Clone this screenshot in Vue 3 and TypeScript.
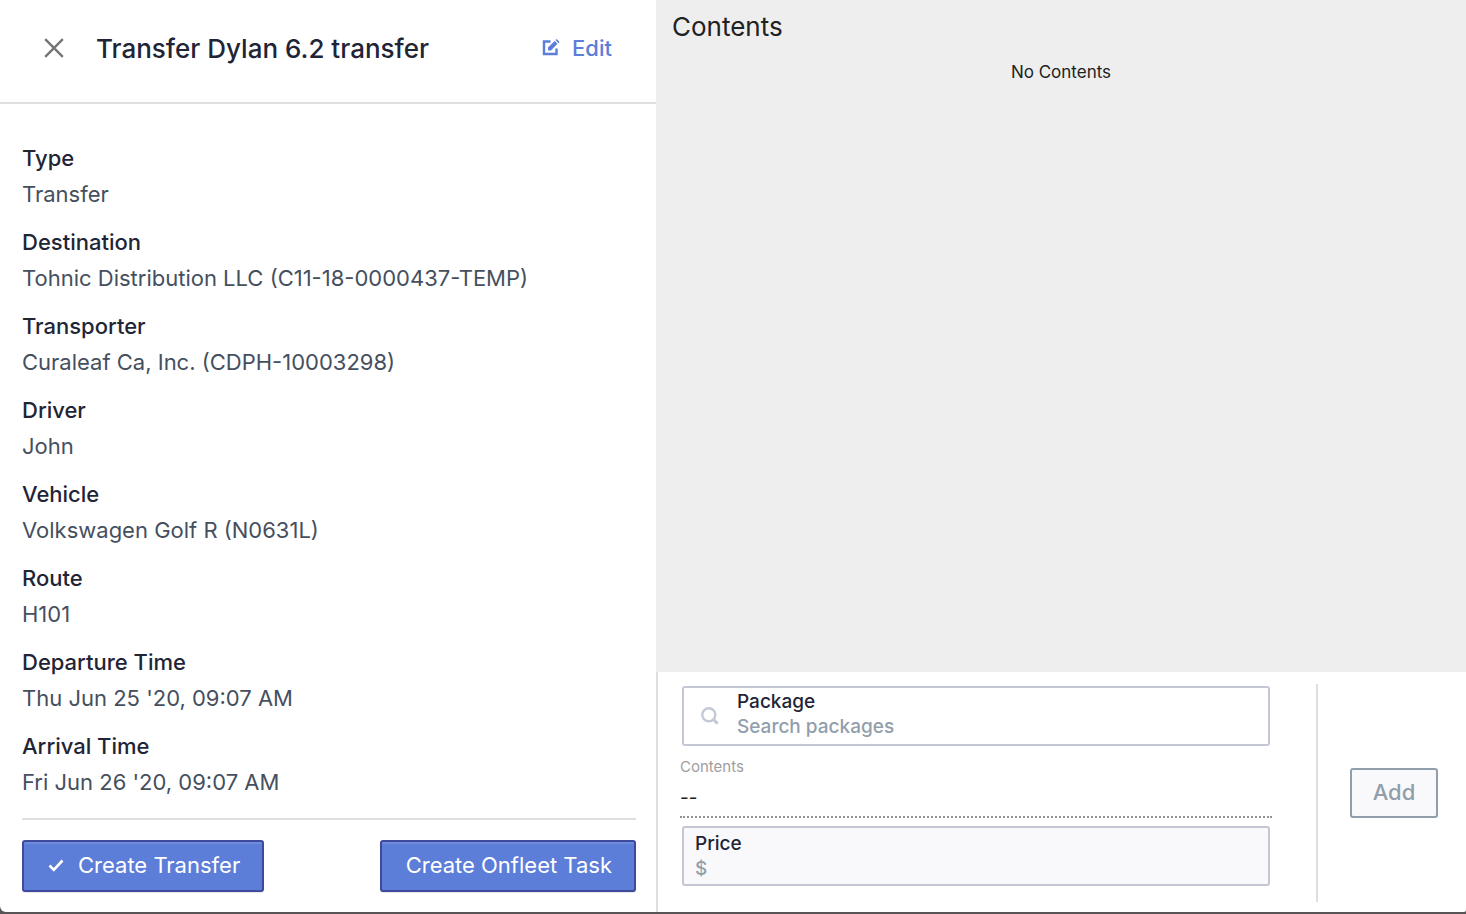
<script setup lang="ts">
import { ref } from 'vue'

interface Detail {
  label: string
  value: string
}

const details: Detail[] = [
  { label: 'Type', value: 'Transfer' },
  { label: 'Destination', value: 'Tohnic Distribution LLC (C11-18-0000437-TEMP)' },
  { label: 'Transporter', value: 'Curaleaf Ca, Inc. (CDPH-10003298)' },
  { label: 'Driver', value: 'John' },
  { label: 'Vehicle', value: 'Volkswagen Golf R (N0631L)' },
  { label: 'Route', value: 'H101' },
  { label: 'Departure Time', value: "Thu Jun 25 '20, 09:07 AM" },
  { label: 'Arrival Time', value: "Fri Jun 26 '20, 09:07 AM" },
]

const search = ref('')
const price = ref('')
const packageContents = ref('--')
</script>

<template>
  <main class="dialog">
    <section class="summary">
      <header class="summary-header">
        <button class="icon-button" type="button" aria-label="Close">
          <svg width="20" height="20" viewBox="0 0 20 20" fill="none" stroke="#757575" stroke-width="2.4">
            <path d="M1.2 1.2 18.8 18.8M18.8 1.2 1.2 18.8" />
          </svg>
        </button>
        <h1>Transfer Dylan 6.2 transfer</h1>
        <button class="edit" type="button">
          <svg width="18" height="18" viewBox="0 0 18 18">
            <path d="M8.500 2.500H2v12.500h12.500V9.500" fill="none" stroke="#5c7dd8" stroke-width="2.4" />
            <path d="M6 11.500V8.500L12.600 1.900l2.900 2.900L9 11.500zM13.400 1.100l.6-.6q.6-.6 1.200 0l1.900 1.900q.6.6 0 1.200l-.6.6z" fill="#5c7dd8" />
          </svg>
          <span>Edit</span>
        </button>
      </header>

      <div class="summary-body">
        <dl class="details">
          <div v-for="item in details" :key="item.label">
            <dt>{{ item.label }}</dt>
            <dd>{{ item.value }}</dd>
          </div>
        </dl>
        <footer class="actions">
          <button class="primary" type="button">
            <svg width="16" height="16" viewBox="0 0 16 16" fill="none" stroke="#fff" stroke-width="2.6">
              <path d="M1.500 8.500 5.800 12.800 14.500 3.500" />
            </svg>
            <span>Create Transfer</span>
          </button>
          <button class="primary" type="button">Create Onfleet Task</button>
        </footer>
      </div>
    </section>

    <section class="contents">
      <div class="contents-list">
        <h2>Contents</h2>
        <p>No Contents</p>
      </div>
      <form class="add-form" @submit.prevent>
        <div class="fields">
          <div class="field search-field">
            <svg width="18" height="18" viewBox="0 0 18 18" fill="none" stroke="#c4cad5">
              <circle cx="7.800" cy="7.800" r="6.500" stroke-width="2.400" />
              <path d="m12.400 12.400 4.300 4.300" stroke-width="3" />
            </svg>
            <div class="field-text">
              <label for="package">Package</label>
              <input id="package" v-model="search" type="text" placeholder="Search packages" />
            </div>
          </div>
          <div class="readonly-field">
            <label for="package-contents">Contents</label>
            <input id="package-contents" v-model="packageContents" type="text" disabled />
          </div>
          <div class="field price-field">
            <div class="field-text">
              <label for="price">Price</label>
              <input id="price" v-model="price" type="text" placeholder="$" disabled />
            </div>
          </div>
        </div>
        <div class="submit">
          <button class="add" type="submit" disabled>Add</button>
        </div>
      </form>
    </section>
  </main>
</template>

<style>
body {
  margin: 0;
  background: #585456;
}
</style>

<style scoped>
* {
  box-sizing: border-box;
}

.dialog {
  display: grid;
  grid-template-columns: minmax(0, 656fr) minmax(0, 810fr);
  min-height: calc(100vh - 2px);
  margin-bottom: 2px;
  overflow: hidden;
  background: #fff;
  border-radius: 0 0 2px 6px;
  color: #212b36;
  font-family: Inter, "Liberation Sans", sans-serif;
}

button,
input {
  font-family: inherit;
}

svg {
  display: block;
  flex: none;
}

.summary,
.contents,
.summary-body {
  display: flex;
  flex-direction: column;
}

.summary-body,
.contents-list {
  flex: 1;
}

.summary-header {
  display: flex;
  align-items: center;
  height: 104px;
  padding: 0 44px 6px;
  border-bottom: 2px solid #dfdfdf;
}

.icon-button,
.edit {
  padding: 0;
  border: 0;
  background: none;
  cursor: pointer;
}

h1 {
  flex: 1;
  margin: 0 0 0 32px;
  padding-top: 2px;
  color: #1f2536;
  font-size: 26px;
  font-weight: 500;
  line-height: 32px;
}

.edit {
  display: flex;
  align-items: center;
  gap: 12px;
  color: #5c7dd8;
  font-size: 22px;
  font-weight: 500;
  line-height: 28px;
}

.summary-body {
  padding: 36px 20px 20px 22px;
}

.details {
  display: flex;
  flex: 1;
  flex-direction: column;
  gap: 12px;
  margin: 0;
  padding-bottom: 18px;
  font-size: 22px;
  line-height: 36px;
}

dt {
  color: #1f2536;
  font-weight: 500;
}

dd {
  margin: 0;
  color: #454f5e;
}

.actions {
  display: flex;
  justify-content: space-between;
  padding-top: 20px;
  border-top: 2px solid #dfdfdf;
}

.primary {
  display: flex;
  align-items: center;
  gap: 14px;
  height: 52px;
  padding: 0 22px 2px 24px;
  border: 2px solid #3f4a9c;
  border-radius: 3px;
  background: #5c7dd8;
  box-shadow: inset 0 2px #6e8bdc, 0 1px 1px #e4e6ea;
  color: #fff;
  font-size: 22px;
  font-weight: 400;
  cursor: pointer;
}

.contents-list {
  padding: 10px 16px;
  background: #eee;
  color: #212121;
}

h2 {
  margin: 0;
  font-size: 26px;
  font-weight: 400;
  line-height: 34px;
}

.contents-list p {
  margin: 16px 0 0;
  font-size: 17px;
  line-height: 24px;
  text-align: center;
}

.add-form {
  display: flex;
  gap: 44px;
  height: 240px;
  padding: 12px 28px 10px 22px;
  border-left: 2px solid #dfdfdf;
}

.fields {
  display: flex;
  flex: 1;
  flex-direction: column;
  min-width: 0;
  padding-top: 2px;
}

.field {
  display: flex;
  align-items: center;
  height: 60px;
  margin: 0 2px;
  border: 2px solid #c4c8d5;
  border-radius: 3px;
}

.search-field {
  gap: 18px;
  padding: 0 17px 4px;
}

.search-field svg {
  margin-top: 4px;
}

.price-field {
  padding: 0 11px;
  background: #f9f9fb;
}

.field-text {
  flex: 1;
  min-width: 0;
}

.field label {
  display: block;
  color: #1f2536;
  font-size: 19px;
  font-weight: 500;
  line-height: 24px;
}

input {
  display: block;
  width: 100%;
  height: 24px;
  padding: 0;
  border: 0;
  outline: 0;
  background: none;
  color: #212121;
  font-size: 19px;
}

.field input {
  font-weight: 500;
}

input::placeholder {
  color: #919eab;
  opacity: 1;
}

.readonly-field {
  height: 72px;
  margin: 0 0 8px;
  padding-top: 10px;
  border-bottom: 2px dotted #949494;
}

.readonly-field label {
  display: block;
  color: #9e9e9e;
  font-size: 15px;
  line-height: 22px;
}

.readonly-field input {
  height: 38px;
}

.submit {
  display: flex;
  align-items: center;
  padding-left: 32px;
  border-left: 2px solid #dfdfdf;
}

.add {
  width: 88px;
  height: 50px;
  padding: 0 0 2px;
  border: 2px solid #919eab;
  border-radius: 3px;
  background: #f9f9fb;
  color: #919eab;
  font-size: 22px;
  font-weight: 500;
}
</style>
